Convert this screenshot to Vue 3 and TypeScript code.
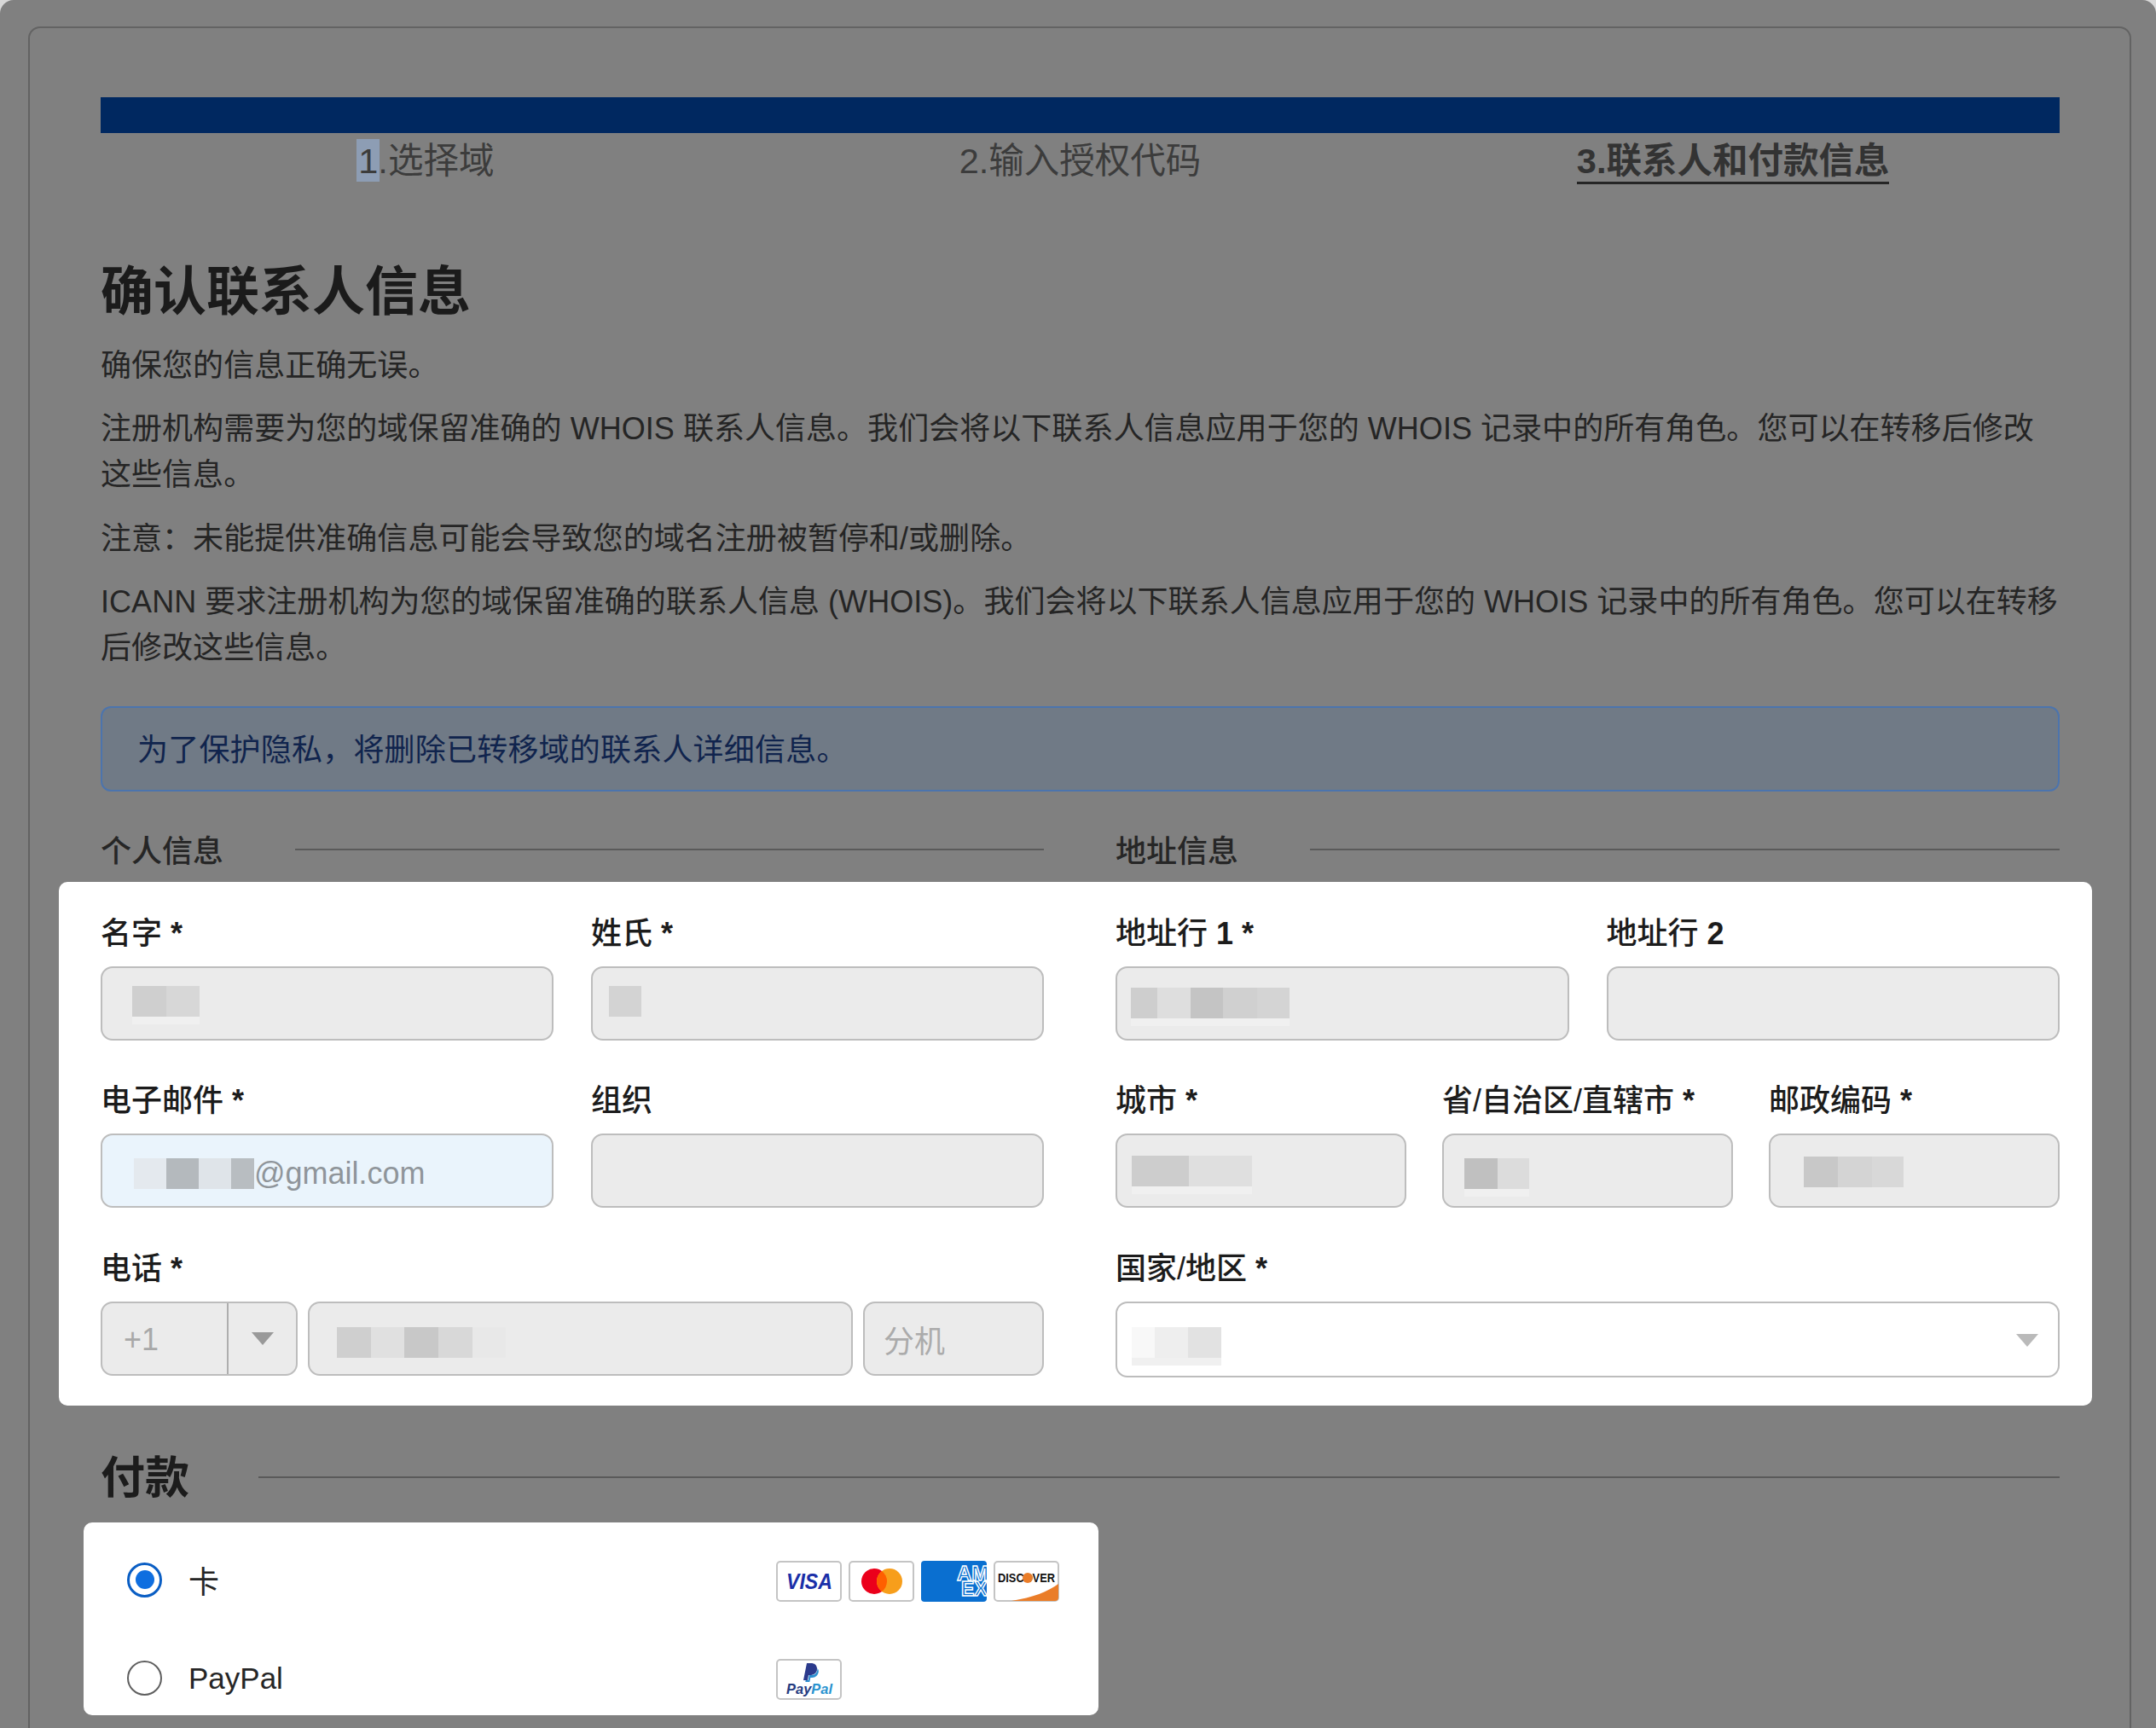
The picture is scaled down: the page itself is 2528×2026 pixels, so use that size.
<script setup lang="ts">
interface Block { w: number; c: string }
interface Field {
  label: string
  mark?: string
  pad?: number
  top?: number
  blocks?: Block[]
  tint?: boolean
  halo?: boolean
  tail?: string
}

const b = (w: number, c: string): Block => ({ w, c })

const leftRows: Field[][] = [
  [
    { label: '名字', mark: '*', pad: 35, top: 21, blocks: [b(40, '#cfcfcf'), b(39, '#d7d7d7')], halo: true },
    { label: '姓氏', mark: '*', pad: 19, top: 21, blocks: [b(38, '#d3d3d3')] },
  ],
  [
    {
      label: '电子邮件', mark: '*', pad: 37, top: 27, tint: true, tail: '@gmail.com',
      blocks: [b(38, '#e4e9ee'), b(38, '#b4b9bd'), b(38, '#dfe4e9'), b(27, '#b8bdc1')],
    },
    { label: '组织' },
  ],
]

const rightRows: Field[][] = [
  [
    {
      label: '地址行', mark: '1 *', pad: 16, top: 23, halo: true,
      blocks: [b(31, '#cecece'), b(39, '#dedede'), b(38, '#c4c4c4'), b(40, '#d0d0d0'), b(38, '#d4d4d4')],
    },
    { label: '地址行', mark: '2' },
  ],
  [
    { label: '城市', mark: '*', pad: 17, top: 24, blocks: [b(67, '#cdcdcd'), b(74, '#dfdfdf')], halo: true },
    { label: '省/自治区/直辖市', mark: '*', pad: 24, top: 27, blocks: [b(39, '#c0c0c0'), b(37, '#dcdcdc')], halo: true },
    { label: '邮政编码', mark: '*', pad: 39, top: 25, blocks: [b(40, '#c8c8c8'), b(40, '#d4d4d4'), b(37, '#d8d8d8')] },
  ],
]

const phoneBlocks = [b(40, '#cfcfcf'), b(39, '#e0e0e0'), b(40, '#c8c8c8'), b(40, '#d8d8d8'), b(39, '#e8e8e8')]
const countryBlocks = [b(27, '#f8f8f8'), b(39, '#eeeeee'), b(39, '#e2e2e2')]
</script>

<template>
  <div class="page">
    <div class="card">
      <div class="progress"></div>
      <div class="steps">
        <div class="step"><span class="step-text"><span class="selected">1</span>.选择域</span></div>
        <div class="step"><span class="step-text">2.输入授权代码</span></div>
        <div class="step"><span class="step-text active">3.联系人和付款信息</span></div>
      </div>

      <h1 class="title">确认联系人信息</h1>
      <p class="para">确保您的信息正确无误。</p>
      <p class="para">注册机构需要为您的域保留准确的 WHOIS 联系人信息。我们会将以下联系人信息应用于您的 WHOIS 记录中的所有角色。您可以在转移后修改这些信息。</p>
      <p class="para">注意：未能提供准确信息可能会导致您的域名注册被暂停和/或删除。</p>
      <p class="para">ICANN 要求注册机构为您的域保留准确的联系人信息 (WHOIS)。我们会将以下联系人信息应用于您的 WHOIS 记录中的所有角色。您可以在转移后修改这些信息。</p>

      <div class="notice">为了保护隐私，将删除已转移域的联系人详细信息。</div>

      <div class="columns heads">
        <div class="head"><span>个人信息</span><i class="rule"></i></div>
        <div class="head"><span>地址信息</span><i class="rule"></i></div>
      </div>

      <div class="form-panel columns">
        <div class="col">
          <div v-for="(row, i) in leftRows" :key="i" class="row">
            <div v-for="f in row" :key="f.label" class="field">
              <label class="label">{{ f.label }} <b v-if="f.mark">{{ f.mark }}</b></label>
              <div class="input" :class="{ tint: f.tint }" :style="{ paddingLeft: (f.pad ?? 0) + 'px', paddingTop: (f.top ?? 0) + 'px' }">
                <div v-if="f.blocks" class="mosaic" :class="{ halo: f.halo }">
                  <span v-for="(m, j) in f.blocks" :key="j" :style="{ width: m.w + 'px', background: m.c }"></span>
                </div>
                <span v-if="f.tail" class="tail">{{ f.tail }}</span>
              </div>
            </div>
          </div>
          <div class="field last">
            <label class="label">电话 <b>*</b></label>
            <div class="phone">
              <div class="input code">
                <span class="code-value">+1</span>
                <span class="code-arrow"><i class="caret"></i></span>
              </div>
              <div class="input number">
                <div class="mosaic">
                  <span v-for="(m, j) in phoneBlocks" :key="j" :style="{ width: m.w + 'px', background: m.c }"></span>
                </div>
              </div>
              <div class="input ext">分机</div>
            </div>
          </div>
        </div>

        <div class="col">
          <div v-for="(row, i) in rightRows" :key="i" class="row" :class="{ tight: row.length === 3 }">
            <div v-for="f in row" :key="f.label + f.mark" class="field">
              <label class="label">{{ f.label }} <b v-if="f.mark">{{ f.mark }}</b></label>
              <div class="input" :style="{ paddingLeft: (f.pad ?? 0) + 'px', paddingTop: (f.top ?? 0) + 'px' }">
                <div v-if="f.blocks" class="mosaic" :class="{ halo: f.halo }">
                  <span v-for="(m, j) in f.blocks" :key="j" :style="{ width: m.w + 'px', background: m.c }"></span>
                </div>
              </div>
            </div>
          </div>
          <div class="field last">
            <label class="label">国家/地区 <b>*</b></label>
            <div class="input country">
              <div class="mosaic halo">
                <span v-for="(m, j) in countryBlocks" :key="j" :style="{ width: m.w + 'px', background: m.c }"></span>
              </div>
              <i class="caret light"></i>
            </div>
          </div>
        </div>
      </div>

      <div class="pay-head"><h2>付款</h2><i class="rule"></i></div>

      <div class="pay-panel">
        <div class="pay-row">
          <span class="pay-choice">
            <span class="radio on"><i></i></span>
            <span class="pay-label">卡</span>
          </span>
          <div class="logos">
            <svg class="logo" viewBox="0 0 77 48">
              <rect x="1" y="1" width="75" height="46" rx="4" fill="#fff" stroke="#c4c4c4" stroke-width="2" />
              <text x="39" y="33" text-anchor="middle" font-family="Liberation Sans" font-size="26" font-weight="700" font-style="italic" fill="#1a2fa8" textLength="54" lengthAdjust="spacingAndGlyphs">VISA</text>
            </svg>
            <svg class="logo" viewBox="0 0 77 48">
              <rect x="1" y="1" width="75" height="46" rx="4" fill="#fff" stroke="#c4c4c4" stroke-width="2" />
              <circle cx="30" cy="24" r="15" fill="#eb001b" />
              <circle cx="48" cy="24" r="15" fill="#f79e1b" />
              <path d="M39 12a15 15 0 0 1 0 24a15 15 0 0 1 0-24z" fill="#ff5f00" />
            </svg>
            <svg class="logo" viewBox="0 0 77 48">
              <rect width="77" height="48" rx="4" fill="#0a6fd0" />
              <text x="42" y="23" font-family="Liberation Sans" font-size="24" font-weight="700" fill="#0a6fd0" stroke="#fff" stroke-width="1.4">AM</text>
              <text x="47" y="41" font-family="Liberation Sans" font-size="23" font-weight="700" fill="#0a6fd0" stroke="#fff" stroke-width="1.4">EX</text>
            </svg>
            <svg class="logo" viewBox="0 0 77 48">
              <rect x="1" y="1" width="75" height="46" rx="4" fill="#fff" stroke="#c4c4c4" stroke-width="2" />
              <path d="M21 47C46 43 64 36 76 27V43a4 4 0 0 1-4 4z" fill="#ea7d29" />
              <text x="38.500" y="25" text-anchor="middle" font-family="Liberation Sans" font-size="15.500" font-weight="700" fill="#111" textLength="67" lengthAdjust="spacingAndGlyphs">DISCOVER</text>
              <circle cx="40" cy="20" r="6" fill="#ea7d29" />
            </svg>
          </div>
        </div>
        <div class="pay-row">
          <span class="pay-choice">
            <span class="radio"></span>
            <span class="pay-label latin">PayPal</span>
          </span>
          <div class="logos">
            <svg class="logo" viewBox="0 0 77 48">
              <rect x="1" y="1" width="75" height="46" rx="4" fill="#fff" stroke="#c4c4c4" stroke-width="2" />
              <path d="M36 5h5c4 0 6.500 2 7 6a7 7 0 0 1-7 8h-3l-1 6h-5z" fill="#2b3a8c" />
              <path d="M48 11c1.500 1 2 2.500 1.800 4-.5 4-3.500 7-7.500 7h-2l-1 5h-5l.4-2h3l1-6h3c4 0 7-3.500 6.800-8z" fill="#2c8fd0" />
              <text x="39" y="41" text-anchor="middle" font-family="Liberation Sans" font-size="17" font-weight="700" font-style="italic" fill="#253b80" textLength="54" lengthAdjust="spacingAndGlyphs">Pay<tspan fill="#2a93cf">Pal</tspan></text>
            </svg>
          </div>
        </div>
      </div>
    </div>
  </div>
</template>

<style>
html, body { margin: 0; background: #d8d8d8; }
</style>

<style scoped>
/* Shell */
.page { width: 2528px; height: 2026px; overflow: hidden; box-sizing: border-box; padding: 31px 29px 0 33px; background: #808080; border-radius: 16px 16px 0 0; font-family: "Liberation Sans", "Noto Sans CJK SC", sans-serif; color: #222; }
.card { box-sizing: border-box; height: 2100px; border: 2px solid #636363; border-radius: 14px; padding: 81px 82px 0 83px; }

/* Steps */
.progress { height: 42px; background: #002860; }
.steps { display: grid; grid-template-columns: repeat(3, 1fr); padding-top: 7px; }
.step { text-align: center; }
.step-text { display: inline-block; font-size: 41.5px; line-height: 52px; height: 50px; color: #3c3c3c; }
.step-text.active { font-weight: 700; color: #333; border-bottom: 3px solid #252525; }
.selected { display: inline-block; padding: 0 2px; margin: 0 -2px 0 -4px; background: #8d9db4; height: 50px; vertical-align: top; }

/* Intro copy */
.title { margin: 87px 0 -2px; font-size: 62px; line-height: 80px; font-weight: 700; color: #1b1b1b; }
.para { margin: 20.5px 0 0; font-size: 36px; line-height: 54px; letter-spacing: 0.04px; color: #252525; }
.notice { box-sizing: border-box; height: 100px; margin-top: 41px; padding: 0 0 5px 41px; display: flex; align-items: center; font-size: 36px; letter-spacing: 0.2px; color: #10244d; background: #707a86; border: 2px solid #4c74ad; border-radius: 12px; }

/* Section heads */
.columns { display: grid; grid-template-columns: 1106px 1107px; column-gap: 84px; }
.heads { box-sizing: border-box; margin-top: 39px; height: 67px; padding-bottom: 3px; }
.head { display: flex; align-items: center; gap: 84px; font-size: 36px; line-height: 54px; font-weight: 500; color: #262626; }
.rule { flex: 1; height: 2px; background: #5a5a5a; margin-top: -6px; }

/* Form panel */
.form-panel { box-sizing: content-box; width: 2297px; margin: 0 -38px 0 -49px; padding: 37px 38px 33px 49px; background: #fff; border-radius: 10px; }
.col { display: flex; flex-direction: column; gap: 47px; }
.row { display: flex; gap: 44px; }
.row.tight { gap: 42px; }
.field { flex: 1; min-width: 0; }
.field.last { margin-top: 1px; }
.label { display: block; height: 44px; margin-bottom: 18px; font-size: 36px; line-height: 47px; font-weight: 500; color: #1c1c1c; white-space: nowrap; }
.label b { font-weight: 700; }
.input { box-sizing: border-box; height: 87px; display: flex; align-items: flex-start; background: #ebebeb; border: 2px solid #bdbdbd; border-radius: 14px; font-size: 36px; }
.input.tint { background: #eaf4fc; }
.mosaic { display: flex; height: 36px; flex: none; }
.mosaic.halo { box-shadow: 0 9px 0 #f0f0f0; }
.tail { line-height: 36px; color: #8f959a; }

/* Phone */
.phone { display: flex; gap: 12px; }
.code { width: 231px; flex: none; align-items: stretch; }
.code-value { width: 148px; box-sizing: border-box; padding: 0 0 0 25px; line-height: 85px; color: #a8a8a8; border-right: 2px solid #aeaeae; }
.code-arrow { flex: 1; display: flex; align-items: center; justify-content: center; }
.caret { display: block; width: 0; height: 0; border-style: solid; border-width: 15px 13px 0; border-color: #999 transparent transparent; }
.caret.light { border-color: #bababa transparent transparent; }
.number { flex: 1; padding: 28px 0 0 32px; }
.ext { width: 212px; flex: none; align-items: center; padding-left: 22px; color: #ababab; }

/* Country */
.country { height: 89px; padding: 28px 23px 0 17px; background: #fff; justify-content: space-between; }
.country .caret { margin-top: 8px; }

/* Payment */
.pay-head { display: flex; align-items: center; gap: 81px; margin-top: 51px; height: 68px; }
.pay-head h2 { margin: 0; font-size: 52px; line-height: 68px; font-weight: 700; color: #1c1c1c; }
.pay-head .rule { margin-top: -3px; }
.pay-panel { box-sizing: border-box; width: 1190px; margin: 18px 0 0 -20px; padding: 45px 46px 18px 51px; background: #fff; border-radius: 10px; display: flex; flex-direction: column; gap: 67px; }
.pay-row { display: flex; align-items: center; justify-content: space-between; height: 48px; }
.pay-choice { display: flex; align-items: center; gap: 31px; margin-bottom: 4px; font-size: 36px; color: #262626; }
.pay-label.latin { font-size: 35px; padding-top: 2px; }
.radio { box-sizing: border-box; width: 41px; height: 41px; flex: none; display: flex; align-items: center; justify-content: center; border: 2px solid #5f5f5f; border-radius: 50%; }
.radio.on { border: 3px solid #0a5ec4; }
.radio.on i { width: 22px; height: 22px; border-radius: 50%; background: #0e6ee0; }
.logos { width: 332px; display: flex; gap: 8px; }
.logo { width: 77px; height: 48px; flex: none; display: block; }
</style>
